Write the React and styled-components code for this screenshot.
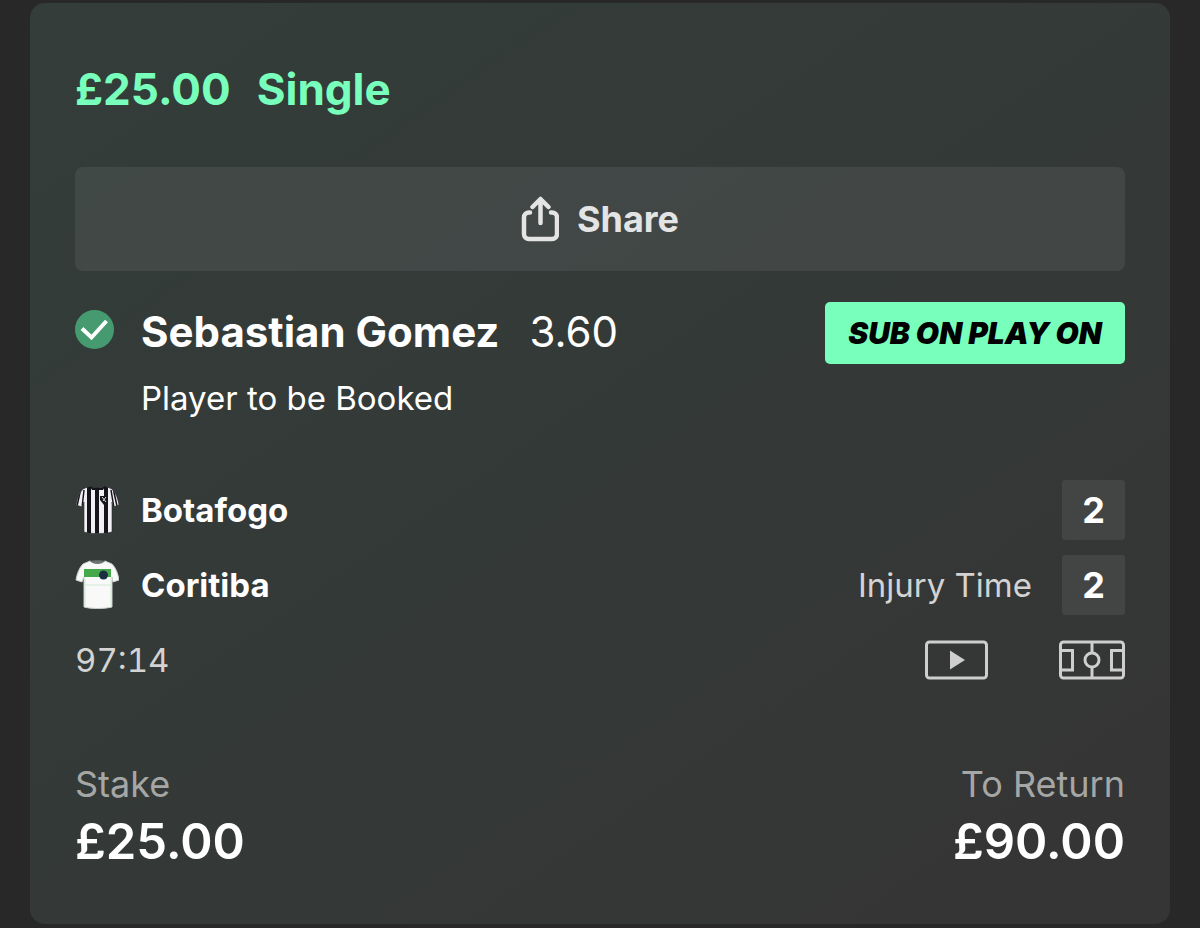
import React from 'react';
import styled, { createGlobalStyle } from 'styled-components';

const colors = {
  page: '#282828',
  green: '#78ffbb',
  tick: '#469a6f',
  white: '#ffffff',
  light: '#e4e4e4',
  soft: '#d2d3d2',
  muted: '#a5a7a6',
};

const GlobalStyle = createGlobalStyle`
  * {
    box-sizing: border-box;
  }
  body {
    margin: 0;
    background: ${colors.page};
    color: ${colors.white};
    font-family: Inter, 'Liberation Sans', sans-serif;
  }
  svg {
    display: block;
    flex: none;
  }
`;

const Card = styled.main`
  margin: 3px 30px;
  padding: 58px 45px 52px;
  border-radius: 15px;
  background: linear-gradient(145deg, #333d3a 0%, #343937 55%, #353535 90%);
`;

const Title = styled.h1`
  display: flex;
  gap: 26px;
  margin: 0 0 50px;
  font-size: 44px;
  font-weight: 700;
  line-height: 56px;
  color: ${colors.green};
`;

const ShareButton = styled.button`
  display: flex;
  align-items: center;
  justify-content: center;
  gap: 18px;
  width: 100%;
  height: 104px;
  padding: 0;
  border: 0;
  border-radius: 8px;
  background: rgba(255, 255, 255, 0.07);
  color: ${colors.light};
  font-family: inherit;
  font-size: 36px;
  font-weight: 700;
  cursor: pointer;
`;

const Selection = styled.section`
  display: grid;
  grid-template-columns: 66px 1fr auto;
  align-items: start;
  row-gap: 14px;
  margin-top: 31px;
`;

const Status = styled.span`
  padding-top: 8px;
`;

const Player = styled.h2`
  display: flex;
  gap: 30px;
  margin: 0;
  font-size: 42px;
  font-weight: 700;
  line-height: 60px;
`;

const Odds = styled.span`
  font-weight: 400;
`;

const Badge = styled.span`
  min-width: 300px;
  padding: 0 16px;
  border-radius: 5px;
  background: ${colors.green};
  color: #000;
  font-size: 30px;
  font-style: italic;
  font-weight: 900;
  line-height: 62px;
  text-align: center;
`;

const Market = styled.p`
  grid-column: 2 / 4;
  margin: 0;
  font-size: 33px;
  line-height: 40px;
`;

const Teams = styled.section`
  display: flex;
  flex-direction: column;
  gap: 15px;
  margin-top: 62px;
`;

const Team = styled.div`
  display: grid;
  grid-template-columns: 66px 1fr auto 63px;
  align-items: center;
`;

const TeamName = styled.span`
  font-size: 33px;
  font-weight: 700;
`;

const Period = styled.span`
  margin-right: 30px;
  font-size: 33px;
  color: ${colors.soft};
`;

const Score = styled.span`
  grid-column: 4;
  border-radius: 3px;
  background: #434444;
  font-size: 36px;
  font-weight: 700;
  line-height: 60px;
  text-align: center;
`;

const MatchBar = styled.div`
  display: flex;
  align-items: center;
  gap: 70px;
  height: 40px;
  margin-top: 25px;
`;

const Clock = styled.time`
  margin-right: auto;
  font-size: 33px;
  font-variant-numeric: tabular-nums;
  color: ${colors.soft};
`;

const IconButton = styled.button`
  padding: 0;
  border: 0;
  background: none;
  color: #cdcecd;
  cursor: pointer;
`;

const Totals = styled.dl`
  display: flex;
  justify-content: space-between;
  margin: 82px 0 0;
`;

const Total = styled.div`
  text-align: ${({ $align }) => $align || 'left'};
`;

const Label = styled.dt`
  font-size: 36px;
  line-height: 44px;
  color: ${colors.muted};
`;

const Amount = styled.dd`
  margin: 6px 0 0;
  font-size: 49px;
  font-weight: 600;
  line-height: 60px;
`;

const ShareIcon = () => (
  <svg width="38" height="46" viewBox="0 0 38 46" fill="none" stroke="currentColor" strokeWidth="4.5" strokeLinecap="round" strokeLinejoin="round" aria-hidden="true">
    <path d="M9 16.5H8a5 5 0 0 0-5 5V38a5 5 0 0 0 5 5h23a5 5 0 0 0 5-5V21.5a5 5 0 0 0-5-5h-1" />
    <path d="M19.5 27V3.5M11.5 11l8-8 8 8" />
  </svg>
);

const TickIcon = () => (
  <svg width="39" height="39" viewBox="0 0 39 39" role="img" aria-label="Won">
    <circle cx="19.5" cy="19.5" r="19.5" fill={colors.tick} />
    <path d="M7 18.5l9.5 9L31.5 11" fill="none" stroke="#fff" strokeWidth="4" />
  </svg>
);

const shirt = 'M15 1C18 3 27 3 30 1L37 4C41 8 43 14 44 20L38 22L37 17V47C29 49 16 49 9 47V17L7 22L1 20C2 14 4 8 8 4Z';

const StripedShirt = () => (
  <svg width="44" height="50" viewBox="0 0 44 50" aria-hidden="true">
    <defs>
      <clipPath id="striped"><path d={shirt} /></clipPath>
    </defs>
    <g clipPath="url(#striped)">
      <path fill="#f2f0f5" d="M0 0h44v50H0z" />
      <path fill="#17151c" d="M12 0h4v50h-4zM20 0h4v50h-4zM29 0h4v50h-4z" />
      <path d="M6 3L2 21M9 5L7 23M38 3l4 18M36 5l3 18" stroke="#17151c" strokeWidth="1.5" />
      <path d="M14 0h17l-3 5h-4l-1 3-2-3h-4z" fill="#17151c" />
      <path d="M25 11h8v4l-4 5-4-5z" fill="#17151c" />
      <path d="M27 12l4 5M31 12l-3 4" stroke="#ddd" strokeWidth="1" />
    </g>
    <path d={shirt} fill="none" stroke="#26282a" strokeWidth="1" opacity="0.6" />
  </svg>
);

const WhiteShirt = () => (
  <svg width="44" height="50" viewBox="0 0 44 50" aria-hidden="true">
    <path d={shirt} fill="#f8f9f8" stroke="#c9cfcb" strokeWidth="1" />
    <path d="M9 9h27v8H9z" fill="#45a84a" />
    <path d="M15 1C18 5 27 5 30 1C26 0 19 0 15 1Z" fill="#6b7370" />
    <path d="M10 25h26M10 19v27M36 19v27" stroke="#d3ead5" strokeWidth="1" fill="none" />
    <circle cx="28.5" cy="15" r="4.5" fill="#1c2f42" />
  </svg>
);

const VideoIcon = () => (
  <svg width="64" height="40" viewBox="0 0 64 40" aria-hidden="true">
    <rect x="1.5" y="2" width="60" height="36" rx="3" fill="none" stroke="currentColor" strokeWidth="3" />
    <path d="M25 10.5v19L40 20z" fill="currentColor" />
  </svg>
);

const PitchIcon = () => (
  <svg width="66" height="40" viewBox="0 0 66 40" fill="none" stroke="currentColor" strokeWidth="3" aria-hidden="true">
    <rect x="1.5" y="2" width="63" height="36" rx="3" />
    <path d="M33 2v11M33 27v11M2 10.5h11.5v19.5H2M64 10.5H52.5v19.5H64" />
    <circle cx="33" cy="20" r="7" />
  </svg>
);

const teams = [
  { name: 'Botafogo', score: 2, Shirt: StripedShirt },
  { name: 'Coritiba', score: 2, Shirt: WhiteShirt, period: 'Injury Time' },
];

const App = () => (
  <>
    <GlobalStyle />
    <Card>
      <Title>
        <span>£25.00</span>
        <span>Single</span>
      </Title>
      <ShareButton type="button">
        <ShareIcon />
        Share
      </ShareButton>

      <Selection>
        <Status>
          <TickIcon />
        </Status>
        <Player>
          Sebastian Gomez
          <Odds>3.60</Odds>
        </Player>
        <Badge>SUB ON PLAY ON</Badge>
        <Market>Player to be Booked</Market>
      </Selection>

      <Teams>
        {teams.map(({ name, score, Shirt, period }) => (
          <Team key={name}>
            <Shirt />
            <TeamName>{name}</TeamName>
            {period && <Period>{period}</Period>}
            <Score>{score}</Score>
          </Team>
        ))}
      </Teams>

      <MatchBar>
        <Clock>97:14</Clock>
        <IconButton type="button" aria-label="Watch live">
          <VideoIcon />
        </IconButton>
        <IconButton type="button" aria-label="Match tracker">
          <PitchIcon />
        </IconButton>
      </MatchBar>

      <Totals>
        <Total>
          <Label>Stake</Label>
          <Amount>£25.00</Amount>
        </Total>
        <Total $align="right">
          <Label>To Return</Label>
          <Amount>£90.00</Amount>
        </Total>
      </Totals>
    </Card>
  </>
);

export default App;
